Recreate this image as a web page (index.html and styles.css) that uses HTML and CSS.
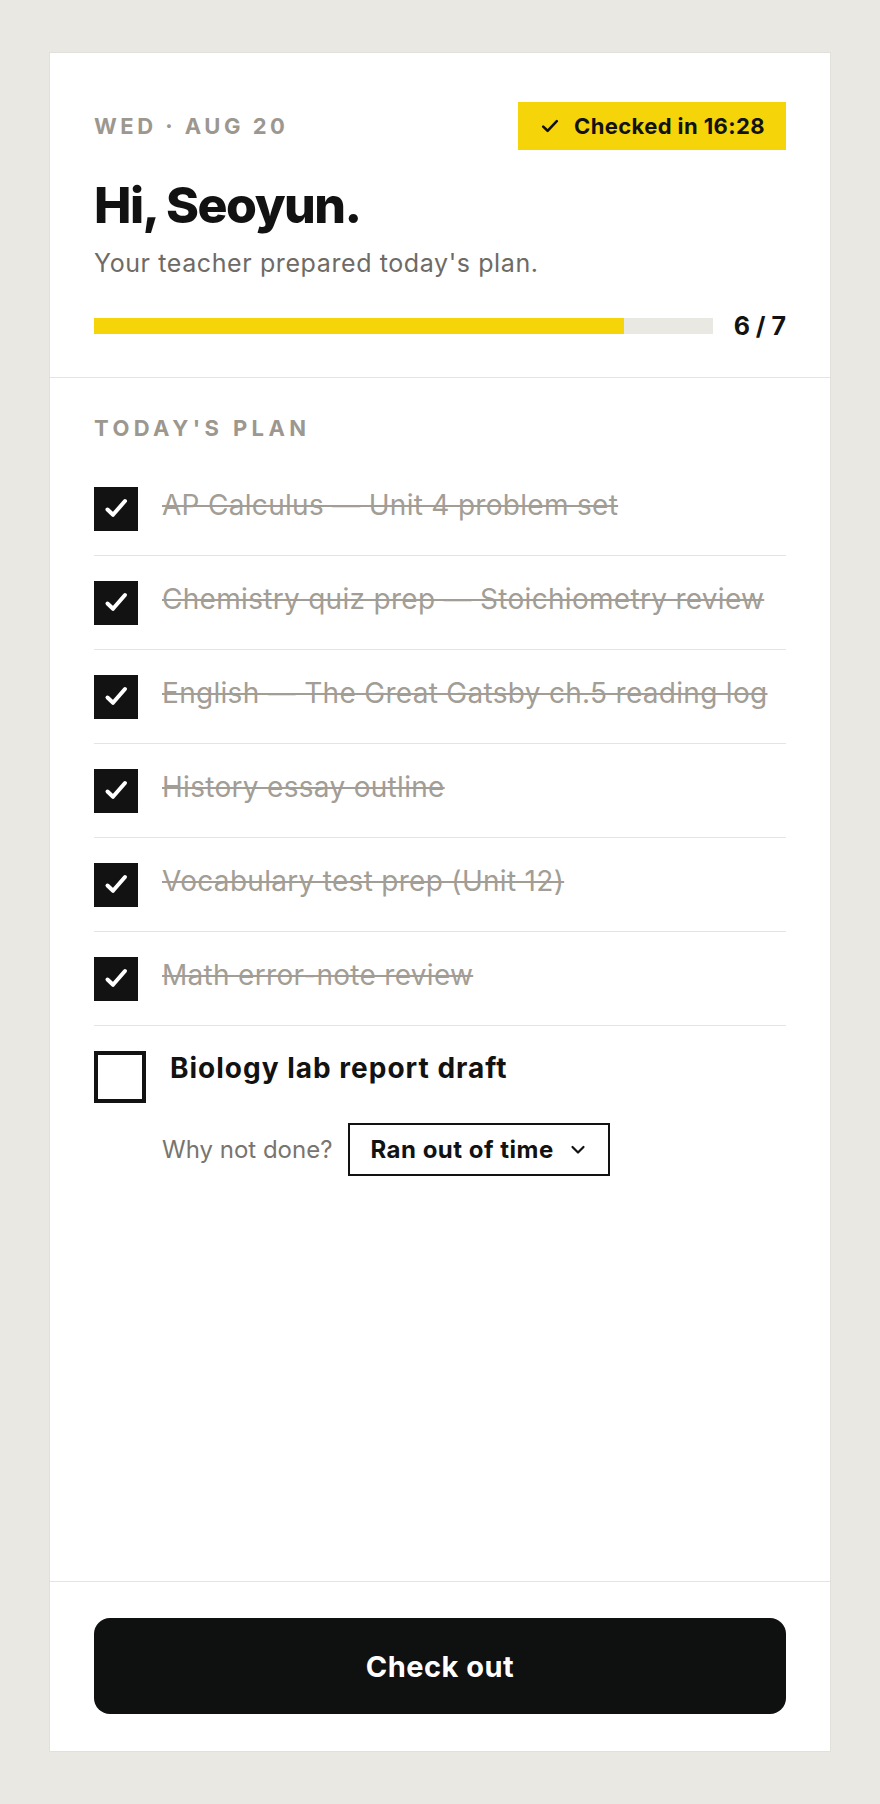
FILE: index.html
```html
<!DOCTYPE html>
<html lang="en">
<head>
<meta charset="utf-8">
<title>Today's plan</title>
<link rel="stylesheet" href="styles.css">
</head>
<body>
<main class="card">
  <header class="header">
    <div class="header-top">
      <span class="date">WED · AUG 20</span>
      <span class="badge">
        <svg class="badge-icon" width="18" height="16" viewBox="0 0 18 16" aria-hidden="true"><path d="M2.2 8.6 L6.6 12.8 L15.8 3.2" fill="none" stroke="#111" stroke-width="2.6" stroke-linecap="round" stroke-linejoin="round"/></svg>
        Checked in 16:28
      </span>
    </div>
    <h1 class="greeting">Hi, Seoyun.</h1>
    <p class="subtitle">Your teacher prepared today's plan.</p>
    <div class="progress">
      <div class="track"><div class="fill" style="width:85.714%"></div></div>
      <span class="count">6 / 7</span>
    </div>
  </header>

  <section class="plan">
    <h2 class="label">TODAY'S PLAN</h2>
    <ul class="tasks">
      <li class="task done">
        <span class="box"><svg width="44" height="44" viewBox="0 0 44 44" aria-hidden="true"><path d="M13.5 22.5 L19 27.8 L31 14" fill="none" stroke="#fff" stroke-width="4" stroke-linecap="round" stroke-linejoin="round"/></svg></span>
        <span class="task-title">AP Calculus — Unit 4 problem set</span>
      </li>
      <li class="task done">
        <span class="box"><svg width="44" height="44" viewBox="0 0 44 44" aria-hidden="true"><path d="M13.5 22.5 L19 27.8 L31 14" fill="none" stroke="#fff" stroke-width="4" stroke-linecap="round" stroke-linejoin="round"/></svg></span>
        <span class="task-title">Chemistry quiz prep — Stoichiometry review</span>
      </li>
      <li class="task done">
        <span class="box"><svg width="44" height="44" viewBox="0 0 44 44" aria-hidden="true"><path d="M13.5 22.5 L19 27.8 L31 14" fill="none" stroke="#fff" stroke-width="4" stroke-linecap="round" stroke-linejoin="round"/></svg></span>
        <span class="task-title">English — The Great Gatsby ch.5 reading log</span>
      </li>
      <li class="task done">
        <span class="box"><svg width="44" height="44" viewBox="0 0 44 44" aria-hidden="true"><path d="M13.5 22.5 L19 27.8 L31 14" fill="none" stroke="#fff" stroke-width="4" stroke-linecap="round" stroke-linejoin="round"/></svg></span>
        <span class="task-title">History essay outline</span>
      </li>
      <li class="task done">
        <span class="box"><svg width="44" height="44" viewBox="0 0 44 44" aria-hidden="true"><path d="M13.5 22.5 L19 27.8 L31 14" fill="none" stroke="#fff" stroke-width="4" stroke-linecap="round" stroke-linejoin="round"/></svg></span>
        <span class="task-title">Vocabulary test prep (Unit 12)</span>
      </li>
      <li class="task done">
        <span class="box"><svg width="44" height="44" viewBox="0 0 44 44" aria-hidden="true"><path d="M13.5 22.5 L19 27.8 L31 14" fill="none" stroke="#fff" stroke-width="4" stroke-linecap="round" stroke-linejoin="round"/></svg></span>
        <span class="task-title">Math error-note review</span>
      </li>
      <li class="task open">
        <div class="task-main">
          <span class="box empty"></span>
          <span class="task-title">Biology lab report draft</span>
        </div>
        <div class="reason">
          <span class="why">Why not done?</span>
          <span class="select">Ran out of time
            <svg width="16" height="10" viewBox="0 0 16 10" aria-hidden="true"><path d="M2.5 2 L8 7.5 L13.5 2" fill="none" stroke="#111" stroke-width="2.2" stroke-linecap="round" stroke-linejoin="round"/></svg>
          </span>
        </div>
      </li>
    </ul>
  </section>

  <footer class="footer">
    <button class="checkout" type="button">Check out</button>
  </footer>
</main>
</body>
</html>
```

FILE: styles.css
```css
* {
  box-sizing: border-box;
}

body {
  margin: 0;
  padding: 52px 0;
  background: #eae8e3;
  font-family: Inter, "Noto Sans", sans-serif;
  color: #111211;
}

.card {
  width: 782px;
  min-height: 1700px;
  margin: 0 auto;
  background: #fff;
  border: 1px solid #e2e0da;
  display: flex;
  flex-direction: column;
}

.header {
  padding: 49px 44px 36px;
  border-bottom: 1px solid #e6e4df;
}

.header-top {
  display: flex;
  justify-content: space-between;
  align-items: center;
}

.date {
  font-size: 22px;
  line-height: 26px;
  font-weight: 700;
  letter-spacing: 3.5px;
  color: #9c978f;
}

.badge {
  display: flex;
  align-items: center;
  gap: 15px;
  height: 48px;
  padding: 0 21px 0 23px;
  background: #f6d40a;
  font-size: 22px;
  font-weight: 700;
  letter-spacing: 0.4px;
  color: #111211;
}

.badge-icon {
  flex: none;
}

.greeting {
  margin: 28px 0 0;
  font-size: 50px;
  line-height: 55px;
  font-weight: 800;
  letter-spacing: -1.5px;
}

.subtitle {
  margin: 14px 0 0;
  font-size: 25px;
  line-height: 32px;
  letter-spacing: 0.6px;
  color: #6e6a65;
}

.progress {
  margin-top: 32px;
  height: 30px;
  display: flex;
  align-items: center;
  gap: 21px;
}

.track {
  flex: 1;
  height: 16px;
  background: #eae8e3;
}

.fill {
  height: 100%;
  background: #f6d40a;
}

.count {
  font-size: 25px;
  line-height: 30px;
  font-weight: 700;
}

.plan {
  flex: 1;
  padding: 37px 44px 0;
}

.label {
  margin: 0;
  font-size: 22px;
  line-height: 26px;
  font-weight: 700;
  letter-spacing: 4.4px;
  color: #9c978f;
}

.tasks {
  list-style: none;
  margin: 21px 0 0;
  padding: 0;
}

.task {
  display: flex;
  align-items: center;
  gap: 24px;
  padding: 24px 0;
  border-bottom: 1px solid #e6e4df;
}

.box {
  flex: none;
  width: 44px;
  height: 44px;
  background: #111211;
  display: flex;
}

.task-title {
  font-size: 28px;
  line-height: 38px;
  padding-bottom: 7px;
  letter-spacing: 0.3px;
  white-space: nowrap;
  color: #a29d95;
  text-decoration: line-through;
  text-decoration-thickness: 2px;
}

.task.open {
  display: block;
  padding: 25px 0 0;
  border-bottom: none;
}

.task-main {
  display: flex;
  align-items: flex-start;
  gap: 24px;
}

.box.empty {
  width: 52px;
  height: 52px;
  background: #fff;
  border: 4px solid #111211;
}

.open .task-title {
  font-size: 28px;
  line-height: 35px;
  padding-bottom: 0;
  letter-spacing: 1px;
  font-weight: 700;
  color: #111211;
  text-decoration: none;
}

.reason {
  display: flex;
  align-items: center;
  gap: 16px;
  margin-top: 20px;
  padding-left: 68px;
}

.why {
  font-size: 24px;
  color: #78746e;
}

.select {
  display: flex;
  align-items: center;
  gap: 16px;
  height: 53px;
  padding: 0 22px 0 20px;
  border: 2px solid #111211;
  font-size: 24px;
  font-weight: 700;
  letter-spacing: 0.5px;
}

.footer {
  padding: 36px 44px 37px;
  border-top: 1px solid #e6e4df;
}

.checkout {
  display: block;
  width: 100%;
  height: 96px;
  border: none;
  border-radius: 16px;
  background: #0f1010;
  color: #fff;
  font-family: Inter, "Noto Sans", sans-serif;
  font-size: 29px;
  font-weight: 700;
  letter-spacing: 0.5px;
}
```
